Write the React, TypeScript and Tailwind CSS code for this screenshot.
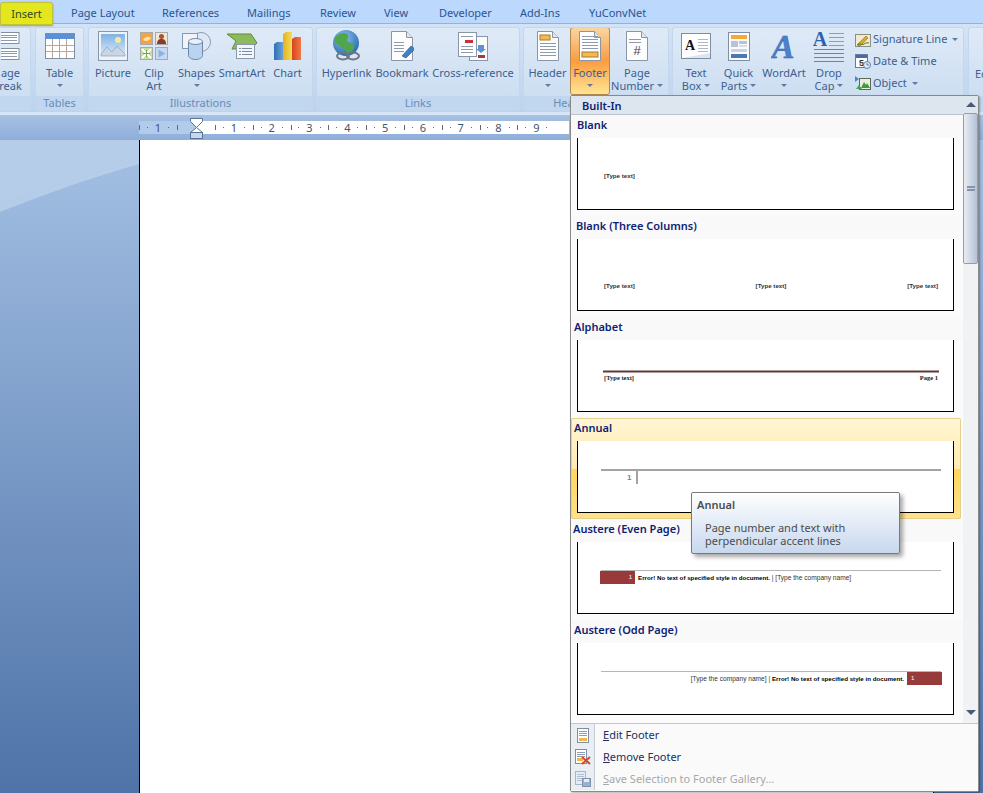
import type { ReactNode } from "react";

const tabs = [
  { label: "Page Layout", w: 91 },
  { label: "References", w: 85 },
  { label: "Mailings", w: 73 },
  { label: "Review", w: 64 },
  { label: "View", w: 55 },
  { label: "Developer", w: 81 },
  { label: "Add-Ins", w: 69 },
  { label: "YuConvNet", w: 70 },
];

function Doc({ children }: { children?: ReactNode }) {
  return (
    <svg width="24" height="30" viewBox="0 0 24 30">
      <path d="M1.500.5h15l6 6v23h-21z" fill="#fdfdfd" stroke="#8a96a6" />
      <path d="M16.500.5v6h6" fill="#dfe6ee" stroke="#8a96a6" />
      {children}
    </svg>
  );
}

function lines(ys: number[], x1 = 4, x2 = 20, color = "#8d9bb0") {
  return ys.map((y) => <path key={y} d={`M${x1} ${y}.5H${x2}`} stroke={color} />);
}

function TableIcon() {
  return (
    <svg width="30" height="26" viewBox="0 0 30 26">
      <rect x=".5" y=".5" width="29" height="25" fill="#fff" stroke="#7f8ea3" />
      <rect x="1" y="1" width="28" height="5" fill="#5b8fd6" />
      {[12, 18].map((y) => <path key={y} d={`M1 ${y}.5H29`} stroke="#b9a79a" />)}
      {[7, 14, 21].map((x) => <path key={x} d={`M${x}.5 6V25`} stroke="#b9a79a" />)}
    </svg>
  );
}

function PictureIcon() {
  return (
    <svg width="30" height="30" viewBox="0 0 30 30">
      <rect x=".5" y=".5" width="29" height="29" fill="#eef3f9" stroke="#8695a8" />
      <defs>
        <linearGradient id="sky" x1="0" y1="0" x2="0" y2="1">
          <stop offset="0" stopColor="#7fb2e6" />
          <stop offset="1" stopColor="#dcebf8" />
        </linearGradient>
      </defs>
      <rect x="3" y="3" width="24" height="22" fill="url(#sky)" />
      <circle cx="20" cy="9" r="3" fill="#f6e8a5" />
      <path d="M3 23l6-7 5 5 5-6 8 8v2H3z" fill="#cbd6e4" stroke="#7f93ad" strokeWidth=".6" />
    </svg>
  );
}

function ClipArtIcon() {
  return (
    <svg width="28" height="28" viewBox="0 0 28 28">
      <rect x=".5" y=".5" width="12" height="12" fill="#f7a33c" stroke="#a9a9a9" />
      <path d="M3 8c3-4 5-4 8-2-2 3-5 4-8 2z" fill="#f6e3b5" />
      <rect x="15.500" y=".5" width="12" height="12" fill="#f3e7d4" stroke="#a9a9a9" />
      <circle cx="21.500" cy="4.500" r="2.500" fill="#a5572e" />
      <path d="M17 12c0-4 2-5 4.500-5S26 8 26 12z" fill="#8a3c28" />
      <rect x=".5" y="15.500" width="12" height="12" fill="#c5dd9e" stroke="#a9a9a9" />
      <path d="M2 17l9 9M11 17l-9 9" stroke="#fff" strokeWidth="2" />
      <path d="M6.500 18v7M3 21.500h7" stroke="#6fa64a" />
      <rect x="15.500" y="15.500" width="12" height="12" fill="#c6d9f2" stroke="#a9a9a9" />
      <path d="M18.500 17.500l7 4-7 4z" fill="#8db3e4" />
    </svg>
  );
}

function ShapesIcon() {
  return (
    <svg width="30" height="28" viewBox="0 0 30 28">
      <circle cx="19" cy="10" r="9.500" fill="#dfe9f6" stroke="#8799b3" />
      <rect x=".5" y="1.500" width="15" height="15" fill="#f0f4f9" stroke="#8799b3" />
      <path d="M6.500 9.500v14c0 2 3 4 7 4s7-2 7-4v-14z" fill="#b9d3f0" stroke="#6d87aa" />
      <ellipse cx="13.500" cy="9.500" rx="7" ry="3" fill="#e7f0fb" stroke="#6d87aa" />
    </svg>
  );
}

function SmartArtIcon() {
  return (
    <svg width="32" height="26" viewBox="0 0 32 26">
      <path d="M1 1h24l6 9-6 6H6l4-8z" fill="#8dbb5c" stroke="#5f8d3a" />
      <rect x="10.500" y="11.500" width="18" height="14" fill="#f3f6fa" stroke="#8c99aa" />
      {[15, 18, 21].map((y) => <path key={y} d={`M13 ${y}.5h2m1 0h10`} stroke="#7a8ba5" />)}
    </svg>
  );
}

function ChartIcon() {
  return (
    <svg width="30" height="30" viewBox="0 0 30 30">
      <defs>
        <linearGradient id="cb" x1="0" x2="1" y1="0" y2="0">
          <stop offset="0" stopColor="#2f6fb5" />
          <stop offset="1" stopColor="#6aa2d8" />
        </linearGradient>
        <linearGradient id="cy" x1="0" x2="1" y1="0" y2="0">
          <stop offset="0" stopColor="#e2b21d" />
          <stop offset="1" stopColor="#f8dc5a" />
        </linearGradient>
        <linearGradient id="cr" x1="0" x2="1" y1="0" y2="0">
          <stop offset="0" stopColor="#d8431e" />
          <stop offset="1" stopColor="#f07a45" />
        </linearGradient>
      </defs>
      <path d="M1 13l3-2h6v18H1z" fill="url(#cb)" />
      <path d="M10 3l3-2h6v28h-9z" fill="url(#cy)" />
      <path d="M19 8l3-2h6v23h-9z" fill="url(#cr)" />
    </svg>
  );
}

function HyperlinkIcon() {
  return (
    <svg width="30" height="32" viewBox="0 0 30 32">
      <defs>
        <radialGradient id="sea" cx=".4" cy=".3" r=".8">
          <stop offset="0" stopColor="#8fc4ee" />
          <stop offset="1" stopColor="#1f5fa8" />
        </radialGradient>
      </defs>
      <circle cx="14" cy="13" r="13" fill="url(#sea)" />
      <path d="M4 6c4-3 9-4 11-2 3 2-1 5 1 8 3 2 7 2 6 6-2 4-5 6-7 5-1-4-5-4-7-7-2-2-5-3-6-5z" fill="#4fa64c" />
      <g fill="none" stroke="#6f7780" strokeWidth="2">
        <ellipse cx="11" cy="26" rx="6" ry="3.500" />
        <ellipse cx="21" cy="26" rx="6" ry="3.500" />
      </g>
    </svg>
  );
}

function BookmarkIcon() {
  return (
    <Doc>
      {lines([11, 14, 17, 20], 4, 14)}
      <path d="M12 25l9-10 4 3-9 9z" fill="#3f7fc6" stroke="#27558f" strokeWidth=".6" />
    </Doc>
  );
}

function CrossRefIcon() {
  return (
    <svg width="30" height="29" viewBox="0 0 30 29">
      <rect x="11.500" y="4.500" width="18" height="24" fill="#fafbfc" stroke="#8a96a6" />
      <rect x=".5" y=".5" width="18" height="24" fill="#fff" stroke="#8a96a6" />
      <rect x="7" y="8" width="8" height="3" fill="#d22f2f" />
      {lines([4, 14, 17, 20], 3, 15)}
      <path d="M20 13h6v4h2l-5 4-5-4h2z" fill="#5b93d4" />
      <rect x="20" y="23" width="7" height="3" fill="#a83b32" />
    </svg>
  );
}

function HeaderIcon() {
  return (
    <Doc>
      <rect x="4" y="4" width="10" height="5" fill="#f5b94f" stroke="#a87c2c" />
      {lines([12, 15, 18, 21, 24])}
    </Doc>
  );
}

function FooterIcon() {
  return (
    <Doc>
      {lines([5, 8, 11, 14, 17])}
      <rect x="4" y="21" width="16" height="5" fill="#f5b94f" stroke="#a87c2c" />
    </Doc>
  );
}

function PageNumberIcon() {
  return (
    <Doc>
      {lines([8, 11], 4, 16)}
      <text x="12" y="24" textAnchor="middle" fontSize="13" fontFamily="Liberation Sans" fill="#445">#</text>
    </Doc>
  );
}

function TextBoxIcon() {
  return (
    <svg width="30" height="26" viewBox="0 0 30 26">
      <rect x=".5" y=".5" width="29" height="25" fill="#fff" stroke="#7f8ea3" />
      <path d="M1 25h28V20z" fill="#dfe5ec" />
      <text x="9" y="17" textAnchor="middle" fontSize="14" fontWeight="700" fontFamily="Liberation Serif" fill="#111">A</text>
      {lines([6, 9, 12, 15, 18], 17, 27, "#aeb7c4")}
    </svg>
  );
}

function QuickPartsIcon() {
  return (
    <svg width="22" height="29" viewBox="0 0 22 29">
      <rect x=".5" y=".5" width="21" height="28" fill="#fbfbfb" stroke="#7f8ea3" />
      <rect x="3" y="3" width="16" height="4" fill="#f5a938" />
      <rect x="3" y="9" width="7" height="6" fill="#b6c4d6" />
      <rect x="11" y="9" width="8" height="3" fill="#b6c4d6" />
      <rect x="11" y="13" width="8" height="2" fill="#d5dde8" />
      <rect x="3" y="17" width="16" height="3" fill="#c9d4e2" />
      <rect x="3" y="22" width="16" height="4" fill="#4d78b8" />
    </svg>
  );
}

function WordArtIcon() {
  return (
    <svg width="26" height="30" viewBox="0 0 26 30">
      <text x="12" y="27" textAnchor="middle" fontSize="34" fontWeight="700" fontStyle="italic" fontFamily="Liberation Serif" fill="#4a83cc" stroke="#2f609f" strokeWidth=".5">A</text>
    </svg>
  );
}

function DropCapIcon() {
  return (
    <svg width="32" height="31" viewBox="0 0 32 31">
      <text x="7" y="15" textAnchor="middle" fontSize="20" fontWeight="700" fontFamily="Liberation Serif" fill="#2e62ae">A</text>
      {lines([2, 6, 10, 14], 16, 31, "#7f9fcc")}
      {lines([18, 22, 26, 30], 1, 31, "#5f86bf")}
    </svg>
  );
}

function SignatureIcon() {
  return (
    <svg width="16" height="15" viewBox="0 0 16 15">
      <rect x=".5" y="2.500" width="15" height="12" fill="#f1ead0" stroke="#8b8f80" />
      <path d="M3 12l8-8 2 2-8 8H3z" fill="#dca52c" stroke="#7c5f16" strokeWidth=".5" />
      <path d="M2 13c3-3 4 1 7-1s3-1 5-1" fill="none" stroke="#3b7a38" />
    </svg>
  );
}

function DateIcon() {
  return (
    <svg width="16" height="15" viewBox="0 0 16 15">
      <rect x=".5" y=".5" width="12" height="13" fill="#fff" stroke="#6a7a90" />
      <rect x="1" y="1" width="11" height="3" fill="#3f6db0" />
      <text x="6.500" y="12" textAnchor="middle" fontSize="9" fontWeight="700" fontFamily="Liberation Sans" fill="#333">5</text>
      <circle cx="12" cy="11" r="3.500" fill="#dfeaf7" stroke="#5c7da8" />
      <path d="M12 9v2h2" fill="none" stroke="#35507a" strokeWidth=".7" />
    </svg>
  );
}

function ObjectIcon() {
  return (
    <svg width="16" height="15" viewBox="0 0 16 15">
      <path d="M0 0l4 3-4 3z" fill="#4b86cf" />
      <rect x="4.500" y="2.500" width="11" height="11" fill="#e9f0df" stroke="#5b6a55" />
      <path d="M6 12l3-6 2 3 1-2 3 5z" fill="#3d9a3f" />
      <path d="M1 13l3-4 3 4z" fill="#46a544" />
    </svg>
  );
}

function PageBreakIcon() {
  return (
    <svg width="19" height="28" viewBox="0 0 19 28">
      <rect x="-2" y=".5" width="20" height="11" fill="#fff" stroke="#7f8ea3" />
      {lines([3, 5, 8], 0, 16)}
      <rect x="-2" y="16.500" width="20" height="11" fill="#fff" stroke="#7f8ea3" />
      {lines([19, 21, 24], 0, 16)}
    </svg>
  );
}

function Caret({ className = "" }: { className?: string }) {
  return <span className={`inline-block w-0 h-0 border-x-[3px] border-x-transparent border-t-[3px] border-t-[#5d7ba3] ${className}`} />;
}

function RibbonButton({
  w,
  icon,
  label,
  label2,
  caret,
  active,
}: {
  w: number;
  icon: ReactNode;
  label: string;
  label2?: string;
  caret?: "inline" | "below";
  active?: boolean;
}) {
  return (
    <div
      style={{ width: w }}
      className={`flex flex-col items-center shrink-0 h-[68px] ${
        active ? "rounded-[3px] border border-[#b08a50] -mt-[1px] bg-gradient-to-b from-[#f8d5a0] via-[#fa9c3c] to-[#ffe594]" : ""
      }`}
    >
      <div className="h-[36px] shrink-0 flex items-center justify-center">{icon}</div>
      <div className="h-[13px] leading-[13px] mt-[2px] whitespace-nowrap">{label}</div>
      <div className="h-[13px] leading-[13px] whitespace-nowrap flex items-center gap-[2px]">
        {label2}
        {caret && <Caret className={caret === "inline" ? "ml-[1px]" : ""} />}
      </div>
    </div>
  );
}

function Group({
  w,
  title,
  children,
  className = "",
}: {
  w: number;
  title: string;
  children: ReactNode;
  className?: string;
}) {
  return (
    <div
      style={{ width: w }}
      className={`shrink-0 h-[84px] flex flex-col rounded-[3px] border border-[#c4d6ec] bg-gradient-to-b from-[#dfeaf7] to-[#c9dcf1] overflow-hidden ${className}`}
    >
      <div className="h-[68px] flex">{children}</div>
      <div className="flex-1 bg-[#c1d6ef] text-[#6b8cb8] text-center leading-[14px]">{title}</div>
    </div>
  );
}

function SmallRow({ icon, label, caret }: { icon: ReactNode; label: string; caret?: boolean }) {
  return (
    <div className="h-[22px] flex items-center gap-[2px] pl-[4px] whitespace-nowrap">
      {icon}
      <span>{label}</span>
      {caret && <Caret className="ml-[3px]" />}
    </div>
  );
}

function Ribbon() {
  return (
    <div className="h-[88px] bg-gradient-to-b from-[#d3e3f7] to-[#bcd3ee] flex gap-[3px] pt-[3px] text-[11px] text-[#3c5f8e] overflow-hidden">
      <Group w={31} title="" className="rounded-l-none border-l-0">
        <RibbonButton w={21} icon={<PageBreakIcon />} label="age" label2="reak" />
      </Group>
      <Group w={49} title="Tables" className="ml-[1px]">
        <RibbonButton w={47} icon={<TableIcon />} label="Table" caret="below" />
      </Group>
      <Group w={225} title="Illustrations" className="ml-[1px]">
        <div className="flex pl-[3px]">
          <RibbonButton w={42} icon={<PictureIcon />} label="Picture" />
          <RibbonButton w={40} icon={<ClipArtIcon />} label="Clip" label2="Art" />
          <RibbonButton w={45} icon={<ShapesIcon />} label="Shapes" caret="below" />
          <RibbonButton w={46} icon={<SmartArtIcon />} label="SmartArt" />
          <RibbonButton w={45} icon={<ChartIcon />} label="Chart" />
        </div>
      </Group>
      <Group w={204} title="Links">
        <div className="flex pl-[2px]">
          <RibbonButton w={55} icon={<HyperlinkIcon />} label="Hyperlink" />
          <RibbonButton w={56} icon={<BookmarkIcon />} label="Bookmark" />
          <RibbonButton w={86} icon={<CrossRefIcon />} label="Cross-reference" />
        </div>
      </Group>
      <Group w={146} title="Header & Footer">
        <div className="flex pl-[1px]">
          <RibbonButton w={45} icon={<HeaderIcon />} label="Header" caret="below" />
          <RibbonButton w={40} icon={<FooterIcon />} label="Footer" caret="below" active />
          <RibbonButton w={54} icon={<PageNumberIcon />} label="Page" label2="Number" caret="inline" />
        </div>
      </Group>
      <Group w={292} title="Text">
        <div className="flex pl-[3px]">
          <RibbonButton w={40} icon={<TextBoxIcon />} label="Text" label2="Box" caret="inline" />
          <RibbonButton w={45} icon={<QuickPartsIcon />} label="Quick" label2="Parts" caret="inline" />
          <RibbonButton w={46} icon={<WordArtIcon />} label="WordArt" caret="below" />
          <RibbonButton w={44} icon={<DropCapIcon />} label="Drop" label2="Cap" caret="inline" />
          <div>
            <SmallRow icon={<SignatureIcon />} label="Signature Line" caret />
            <SmallRow icon={<DateIcon />} label="Date & Time" />
            <SmallRow icon={<ObjectIcon />} label="Object" caret />
          </div>
        </div>
      </Group>
      <Group w={40} title="" className="ml-[1px]">
        <div className="pt-[38px] pl-[6px]">Ed</div>
      </Group>
    </div>
  );
}

function RulerCell({ n }: { n: number }) {
  return (
    <div className="w-[37.8px] shrink-0 flex items-center justify-between text-[11px] text-[#44546a] leading-none">
      <span className="w-px h-[5px] bg-[#5a6b80]" />
      <span className="w-px h-px bg-[#5a6b80]" />
      <span>{n}</span>
      <span className="w-px h-px bg-[#5a6b80]" />
      <span className="w-px" />
    </div>
  );
}

function Ruler() {
  return (
    <div className="h-[28px] bg-gradient-to-b from-[#a8c1e3] to-[#8eaed9] pl-[139px] pt-[6px] border-t-[3px] border-[#d6e6f8] flex relative">
      <div className="h-[13px] w-[57px] bg-[#b3cbea] flex items-center overflow-hidden">
        <RulerCell n={1} />
        <span className="w-px h-[5px] bg-[#5a6b80]" />
      </div>
      <div className="h-[13px] w-[373px] bg-white flex items-center overflow-hidden pl-[19px]">
        {[1, 2, 3, 4, 5, 6, 7, 8, 9].map((n) => <RulerCell key={n} n={n} />)}
      </div>
      <svg className="absolute left-[190px] top-[3px]" width="13" height="21" viewBox="0 0 13 21">
        <path d="M.5.5h12v3l-6 6-6-6z" fill="#fff" stroke="#5b7395" />
        <path d="M6.500 9.500l6 5h-12z" fill="#fff" stroke="#5b7395" />
        <rect x=".5" y="14.500" width="12" height="6" fill="#c7d8ee" stroke="#5b7395" />
      </svg>
    </div>
  );
}

function Workspace() {
  return (
    <div className="h-[653px] flex relative bg-gradient-to-b from-[#a4c0e4] to-[#4f73a8]">
      <div className="w-[139px] shrink-0 h-full relative overflow-hidden">
        <svg width="139" height="120" viewBox="0 0 139 120" className="absolute left-0 top-0">
          <path d="M0 0h139v21C90 34 40 50 0 64z" fill="#b6cdea" />
          <path d="M0 64C40 50 90 34 139 21v3C90 38 40 56 0 72z" fill="#c0d4ec" fillOpacity=".7" />
        </svg>
      </div>
      <div className="w-[795px] shrink-0 h-full bg-white border-x border-black" />
    </div>
  );
}

function Preview({ children }: { children?: ReactNode }) {
  return <div className="flow-root ml-[6px] w-[377px] h-[72px] bg-white border-x border-b border-black">{children}</div>;
}

const tiny = "font-['Liberation_Sans',sans-serif] text-[6.2px] leading-[8px] font-bold text-[#333] whitespace-nowrap";
const tinySerif = "font-['Liberation_Serif',serif] text-[6.500px] leading-[8px] font-bold text-[#222] whitespace-nowrap";

function GalleryItem({
  title,
  indent,
  hot,
  children,
}: {
  title: string;
  indent: number;
  hot?: boolean;
  children: ReactNode;
}) {
  return (
    <div
      className={`h-[101px] ${
        hot
          ? "mr-[2px] rounded-[2px] outline outline-1 -outline-offset-1 outline-[#e6cf8e] bg-[linear-gradient(#fff6d4,#ffeab0_50%,#ffd65c_51%,#ffe28a)]"
          : ""
      }`}
    >
      <div
        style={{ paddingLeft: indent }}
        className={`h-[23px] pb-[2px] flex items-center text-[11px] font-semibold text-[#0f2272] ${hot ? "" : "bg-[#f9f9f9]"}`}
      >
        {title}
      </div>
      {children}
    </div>
  );
}

function MenuRow({ icon, first, rest, disabled }: { icon: ReactNode; first: string; rest: string; disabled?: boolean }) {
  return (
    <div className="h-[22px] flex items-center">
      <div className="w-[24px] h-full shrink-0 flex items-center justify-center bg-[#e9eef3] border-r border-[#c5ccd4]">{icon}</div>
      <div className={`pl-[8px] text-[11px] ${disabled ? "text-[#a8a8a8]" : "text-[#20305f]"}`}>
        <span className="underline">{first}</span>
        {rest}
      </div>
    </div>
  );
}

function EditIcon() {
  return (
    <svg width="12" height="15" viewBox="0 0 12 15">
      <rect x=".5" y=".5" width="11" height="14" fill="#fff" stroke="#7f8ea3" />
      {lines([3, 5, 7], 2, 10)}
      <rect x="2" y="10" width="8" height="3" fill="#f1b64e" />
    </svg>
  );
}

function RemoveIcon() {
  return (
    <svg width="16" height="16" viewBox="0 0 16 16">
      <rect x=".5" y=".5" width="11" height="14" fill="#fff" stroke="#7f8ea3" />
      {lines([3, 5, 7], 2, 10)}
      <rect x="2" y="9" width="6" height="3" fill="#f1b64e" />
      <path d="M7 8l8 7M15 8l-8 7" stroke="#e2402a" strokeWidth="2" />
    </svg>
  );
}

function SaveIcon() {
  return (
    <svg width="16" height="16" viewBox="0 0 16 16">
      <rect x=".5" y=".5" width="10" height="13" fill="#e6ecf3" stroke="#a9b6c8" />
      {lines([3, 5, 7, 9], 2, 9, "#b3bfd0")}
      <rect x="7.500" y="7.500" width="8" height="8" fill="#9db1cc" stroke="#7e93b2" />
      <rect x="9" y="8" width="5" height="3" fill="#e6ecf3" />
    </svg>
  );
}

function FooterGallery() {
  return (
    <div className="absolute left-[570px] top-[95px] w-[409px] h-[697px] bg-[#fafafa] border border-[#8a8a8a] rounded-[2px] shadow-[1px_1px_2px_rgba(0,0,0,0.3)] flex flex-col">
      <div className="flex h-[627px]">
        <div className="w-[392px] shrink-0 bg-[#fbfbfb]">
          <div className="h-[19px] bg-[#dde6ee] border-b border-[#b9c4cf] pl-[11px] text-[11px] font-semibold text-[#0f2272] leading-[20px]">
            Built-In
          </div>
          <GalleryItem title="Blank" indent={6}>
            <Preview>
              <div className={`${tiny} pl-[26px] pt-[34px]`}>[Type text]</div>
            </Preview>
          </GalleryItem>
          <GalleryItem title="Blank (Three Columns)" indent={5}>
            <Preview>
              <div className={`${tiny} pl-[26px] pr-[15px] pt-[43px] flex justify-between`}>
                <span>[Type text]</span>
                <span>[Type text]</span>
                <span>[Type text]</span>
              </div>
            </Preview>
          </GalleryItem>
          <GalleryItem title="Alphabet" indent={3}>
            <Preview>
              <div className="ml-[25px] mr-[14px] mt-[30px] h-[3px] bg-[#7a2c30] border-y border-[#b09a9a]" />
              <div className={`${tinySerif} pl-[26px] pr-[15px] pt-[1px] flex justify-between`}>
                <span>[Type text]</span>
                <span>Page 1</span>
              </div>
            </Preview>
          </GalleryItem>
          <GalleryItem title="Annual" indent={3} hot>
            <Preview>
              <div className="ml-[23px] mr-[12px] mt-[28px] h-[2px] bg-[#a3a3a3]" />
              <div className="flex pl-[49px]">
                <span className="font-['Liberation_Sans',sans-serif] text-[8px] leading-[13px] font-bold text-[#6f86a8] w-[9px]">1</span>
                <span className="w-[2px] h-[13px] bg-[#a3a3a3]" />
              </div>
            </Preview>
          </GalleryItem>
          <GalleryItem title="Austere (Even Page)" indent={2}>
            <Preview>
              <div className="ml-[23px] mr-[12px] mt-[28px] h-px bg-[#b5b5b5]" />
              <div className="flex items-center pl-[22px]">
                <div className="w-[35px] h-[13px] bg-[#983a3a] text-right pr-[3px] font-['Liberation_Sans',sans-serif] text-[6px] leading-[13px] text-white">1</div>
                <div className={`${tiny} pl-[3px] text-black`}>
                  Error! No text of specified style in document. <span className="font-normal text-[6.6px] text-[#333]">| [Type the company name]</span>
                </div>
              </div>
            </Preview>
          </GalleryItem>
          <GalleryItem title="Austere (Odd Page)" indent={3}>
            <Preview>
              <div className="ml-[23px] mr-[12px] mt-[28px] h-px bg-[#b5b5b5]" />
              <div className="flex items-center justify-end pr-[11px]">
                <div className={`${tiny} pr-[3px] text-black`}>
                  <span className="font-normal text-[6.6px] text-[#333]">[Type the company name] | </span>Error! No text of specified style in document.
                </div>
                <div className="w-[35px] h-[13px] bg-[#983a3a] pl-[4px] font-['Liberation_Sans',sans-serif] text-[6px] leading-[13px] text-white">1</div>
              </div>
            </Preview>
          </GalleryItem>
        </div>
        <div className="flex-1 bg-[#f1f2f4] flex flex-col items-center">
          <div className="h-[17px] w-full bg-[#dde6ee] flex items-center justify-center">
            <span className="w-0 h-0 border-x-[5px] border-x-transparent border-b-[5px] border-b-[#4a5a75]" />
          </div>
          <div className="w-[15px] h-[151px] border border-[#8f9db2] rounded-[2px] bg-[linear-gradient(90deg,#e8edf4,#c9d4e3_60%,#b4c2d6)] flex items-center justify-center">
            <span className="w-[8px] h-[5px] border-y-2 border-[#8594aa]" />
          </div>
          <div className="flex-1" />
          <span className="mb-[8px] w-0 h-0 border-x-[5px] border-x-transparent border-t-[5px] border-t-[#4a5a75]" />
        </div>
      </div>
      <div className="flex-1 border-t border-[#c5c9ce] flex flex-col bg-[#fafafa]">
        <MenuRow icon={<EditIcon />} first="E" rest="dit Footer" />
        <MenuRow icon={<RemoveIcon />} first="R" rest="emove Footer" />
        <MenuRow icon={<SaveIcon />} first="S" rest="ave Selection to Footer Gallery..." disabled />
      </div>
    </div>
  );
}

function Tooltip() {
  return (
    <div className="absolute left-[691px] top-[492px] w-[209px] h-[62px] rounded-[2px] border border-[#7a7a7a] bg-gradient-to-b from-white to-[#c8d8ee] shadow-[3px_3px_4px_rgba(0,0,0,0.35)] px-[5px] pt-[5px] text-[11px] text-[#4c4c4c]">
      <div className="font-semibold leading-[14px]">Annual</div>
      <div className="pl-[8px] pt-[9px] leading-[13px]">
        <div>Page number and text with</div>
        <div>perpendicular accent lines</div>
      </div>
    </div>
  );
}

export default function App() {
  return (
    <div className="w-[983px] h-[793px] relative overflow-hidden font-['Noto_Sans',sans-serif] text-[11px]">
      <div className="h-[24px] bg-[#bcd8fc] border-b border-[#8fb2e0] flex text-[11px] text-[#2a5590] leading-[26px]">
        <div className="w-[53px] h-[23px] mt-[2px] mr-[18px] rounded-t-[3px] bg-[#e4e61e] border border-[#c2c23a] shadow-[0_1px_2px_rgba(90,90,0,0.5)] text-center text-[#2f4a22] leading-[21px]">
          Insert
        </div>
        {tabs.map((t) => (
          <div key={t.label} style={{ width: t.w }} className="shrink-0 whitespace-nowrap">
            {t.label}
          </div>
        ))}
      </div>
      <Ribbon />
      <Ruler />
      <Workspace />
      <FooterGallery />
      <Tooltip />
    </div>
  );
}
